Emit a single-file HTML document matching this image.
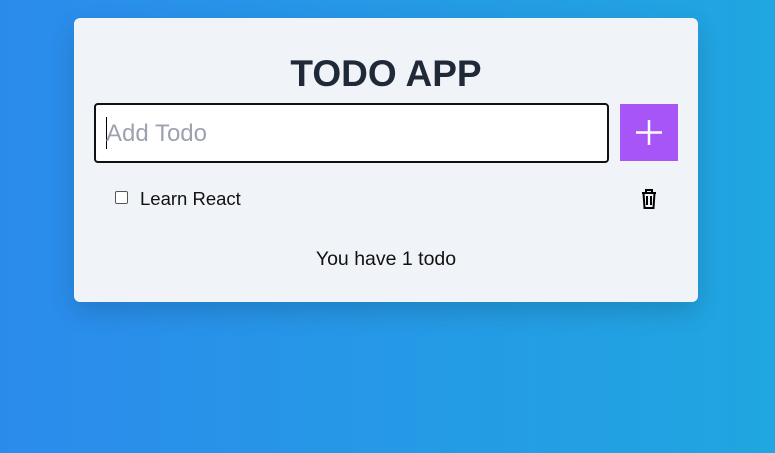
<!DOCTYPE html>
<html><head><style>
html,body{margin:0;width:775px;height:453px;overflow:hidden;font-family:"Liberation Sans",sans-serif;}
body{background:linear-gradient(90deg,#2b8bec,#20a6e0);position:relative;}
.card{position:absolute;left:74px;top:18px;width:624px;height:284px;background:#f0f3f8;border-radius:6px;box-shadow:0 10px 25px rgba(0,0,0,0.15);}
h1{position:absolute;left:0;right:0;top:36px;margin:0;text-align:center;font-size:37px;font-weight:bold;color:#1f2937;line-height:40px;}
.inp{position:absolute;left:20px;top:85px;width:511px;height:56px;background:#fff;border:2px solid #111;border-radius:4px;}
.inp span{position:absolute;left:10px;top:15px;font-size:24px;color:#9ca3af;}
.inp i{position:absolute;left:10px;top:12px;width:1px;height:32px;background:#000;}
.btn{position:absolute;left:546px;top:86px;width:58px;height:57px;background:#a855f7;}
.cb{position:absolute;left:41px;top:173px;width:11px;height:11px;border:1px solid #555;border-radius:2px;background:#fff;}
.t{position:absolute;left:66px;top:170px;font-size:18.5px;color:#111;}
.f{position:absolute;left:0;right:0;top:230px;text-align:center;font-size:19.5px;color:#111;}
</style></head><body>
<div class="card">
<h1>TODO APP</h1>
<div class="inp"><i></i><span>Add Todo</span></div>
<div class="btn"><svg width="58" height="57"><path d="M29 16V41M16 28.5H42" stroke="#fff" stroke-width="2.5"/></svg></div>
<div class="cb"></div>
<div class="t">Learn React</div>
<svg style="position:absolute;left:566px;top:170px" width="18" height="22" viewBox="0 0 18 22"><path d="M2 5H16M6 5V2H12V5M3.5 5L4.5 20H13.5L14.5 5M7 8V17M11 8V17" stroke="#000" stroke-width="2" fill="none"/></svg>
<div class="f">You have 1 todo</div>
</div>
</body></html>
